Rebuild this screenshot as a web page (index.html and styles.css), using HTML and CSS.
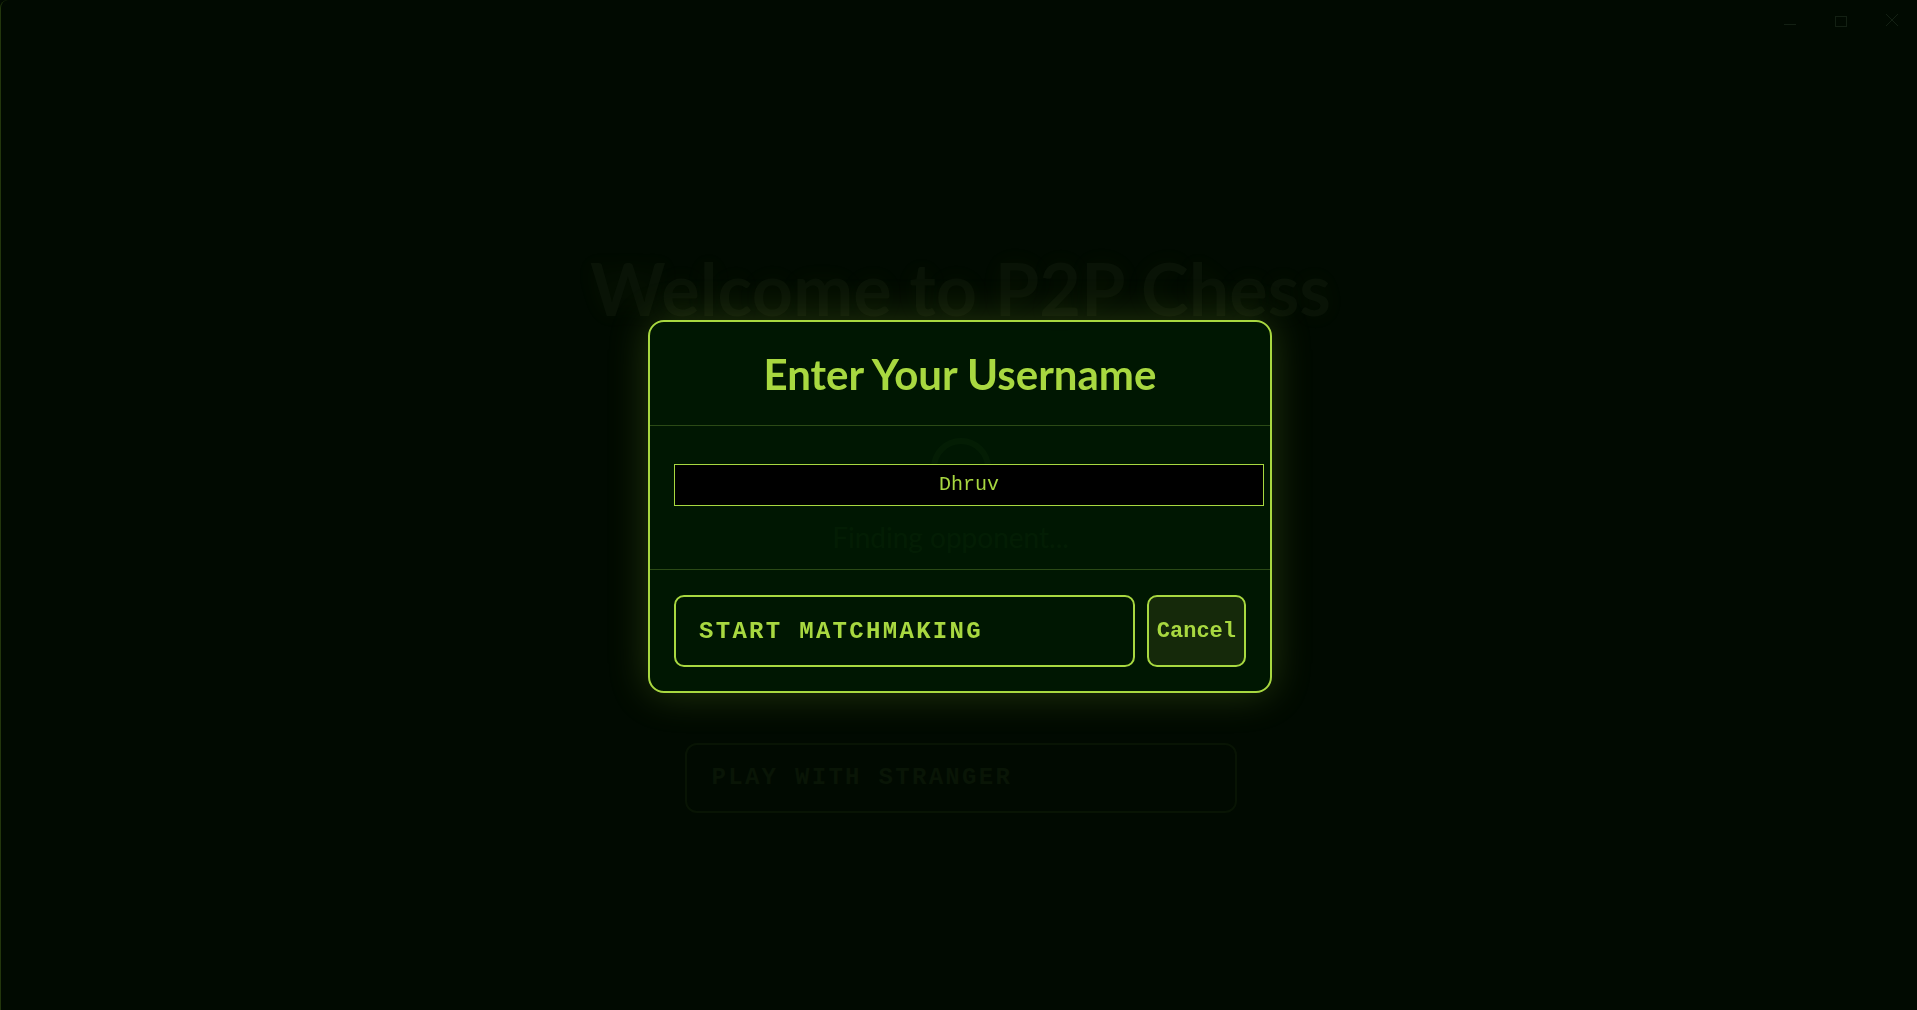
FILE: index.html
```html
<!DOCTYPE html>
<html lang="en">

<head>
    <title>P2P Chess</title>

    <link rel="stylesheet" href="styles.css">
</head>

<body>
    <div class="window">
        <header class="titlebar">
            <span class="caption-btn">
                <svg width="14" height="14" viewBox="0 0 14 14"><line x1="1" y1="10.5" x2="13" y2="10.5" /></svg>
            </span>
            <span class="caption-btn">
                <svg width="14" height="14" viewBox="0 0 14 14"><rect x="1.5" y="2.5" width="11" height="10" /></svg>
            </span>
            <span class="caption-btn">
                <svg width="14" height="14" viewBox="0 0 14 14"><path d="M1 0 L13 12 M13 0 L1 12" /></svg>
            </span>
        </header>

        <main class="lobby">
            <h1 class="lobby-title">Welcome to P2P Chess</h1>
            <div class="spinner"></div>
            <p class="status">Finding opponent...</p>
            <button class="play-btn">PLAY WITH STRANGER</button>
        </main>
    </div>

    <div class="overlay">
        <div class="modal">
            <div class="modal-header">
                <h2>Enter Your Username</h2>
            </div>
            <div class="modal-body">
                <input type="text" class="username-input" value="Dhruv">
            </div>
            <div class="modal-footer">
                <button class="btn-start">START MATCHMAKING</button>
                <button class="btn-cancel">Cancel</button>
            </div>
        </div>
    </div>
</body>

</html>
```

FILE: styles.css
```css
* {
    padding: 0;
    margin: 0;
    box-sizing: border-box;
}

body {
    background-color: #010a01;
    font-family: Lato, "Open Sans", sans-serif;
    overflow: hidden;
}

.window {
    min-height: 100vh;
    border-left: 1px solid #22360c;
    border-top-left-radius: 8px;
}

.titlebar {
    display: flex;
    justify-content: flex-end;
    height: 42px;
}

.caption-btn {
    width: 51px;
    display: flex;
    align-items: center;
    justify-content: center;
}

.caption-btn svg {
    fill: none;
    stroke: #132013;
    stroke-width: 1;
}

.lobby {
    display: flex;
    flex-direction: column;
    align-items: center;
    padding-top: 203px;
    padding-left: 3px;
}

.lobby-title {
    font-size: 72px;
    font-weight: 700;
    line-height: 1.2;
    color: #091306;
    text-shadow: 0 0 24px rgba(168, 216, 64, 0.05);
}

.spinner {
    width: 60px;
    height: 60px;
    margin-top: 107px;
    border: 6px solid #152c0e;
    border-radius: 50%;
}

.status {
    margin-top: 23px;
    padding-right: 20px;
    font-size: 28px;
    line-height: 1.2;
    color: #122c0c;
}

.play-btn {
    margin-top: 188px;
    width: 552px;
    height: 70px;
    padding-left: 25px;
    text-align: left;
    background-color: transparent;
    border: 2px solid #081404;
    border-radius: 12px;
    color: #091506;
    font-family: "Liberation Mono", "Courier New", monospace;
    font-size: 24px;
    font-weight: 700;
    letter-spacing: 2.3px;
}

.overlay {
    position: fixed;
    inset: 0;
    display: flex;
    align-items: center;
    justify-content: center;
    padding: 3px 0 0 3px;
}

.modal {
    width: 624px;
    border: 2px solid #a8d840;
    border-radius: 16px;
    background-color: rgba(0, 26, 2, 0.8);
    box-shadow: 0 0 40px rgba(168, 216, 64, 0.22);
}

.modal-header {
    padding: 28px 24px 27px;
    border-bottom: 1px solid #2b4a16;
    text-align: center;
}

.modal-header h2 {
    font-size: 42px;
    font-weight: 700;
    line-height: 48px;
    color: #a8d840;
}

.modal-body {
    padding: 38px 24px 63px;
}

.username-input {
    box-sizing: content-box;
    width: 100%;
    padding: 8px;
    line-height: 24px;
    border: 1px solid #a8d840;
    background-color: #000;
    color: #a8d840;
    font-family: "Liberation Mono", "Courier New", monospace;
    font-size: 20px;
    text-align: center;
    outline: none;
}

.modal-footer {
    display: flex;
    gap: 12px;
    padding: 25px 24px 24px;
    border-top: 1px solid #2b4a16;
}

.btn-start,
.btn-cancel {
    height: 72px;
    border: 2px solid #a8d840;
    border-radius: 10px;
    color: #a8d840;
    font-family: "Liberation Mono", "Courier New", monospace;
    font-weight: 700;
    cursor: pointer;
}

.btn-start {
    flex: 1;
    padding-left: 23px;
    text-align: left;
    background-color: transparent;
    font-size: 24px;
    letter-spacing: 2.3px;
}

.btn-cancel {
    padding: 0 8px;
    background-color: #15290a;
    font-size: 22px;
}
```
